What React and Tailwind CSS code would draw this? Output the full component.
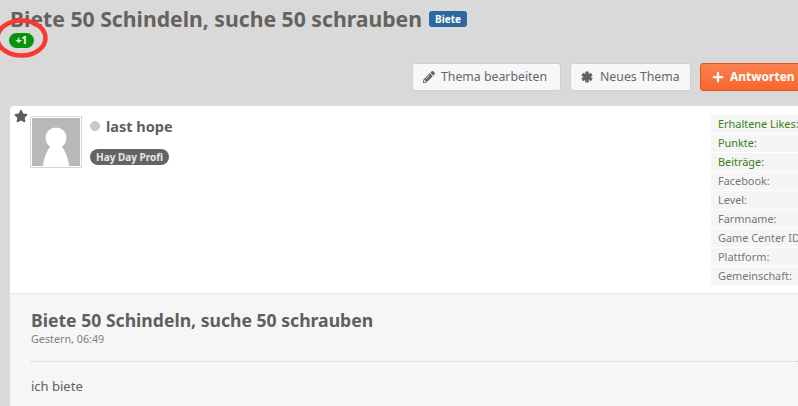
import { FaPencilAlt, FaPlus, FaStar } from "react-icons/fa";

const FONT = "font-['Noto_Sans','Open_Sans',sans-serif]";

const STATS = [
  { label: "Erhaltene Likes:", green: true },
  { label: "Punkte:", green: true },
  { label: "Beiträge:", green: true },
  { label: "Facebook:" },
  { label: "Level:" },
  { label: "Farmname:" },
  { label: "Game Center ID:" },
  { label: "Plattform:" },
  { label: "Gemeinschaft:" },
];

function ToolButton({ icon, label, className }) {
  return (
    <button className={`flex h-[28px] shrink-0 items-center rounded-[3px] border border-[#cfcfcf] bg-[#f7f7f7] text-[12.3px] text-[#66666a] ${className}`}>
      {icon}
      {label}
    </button>
  );
}

function AsteriskIcon() {
  return (
    <svg viewBox="0 0 12 12" className="h-[12px] w-[12px] text-[#66625f]" stroke="currentColor" strokeWidth="3.4">
      <path d="M6 .5V11.5M1.2 3.2 10.8 8.8M10.8 3.2 1.2 8.8" />
    </svg>
  );
}

function Avatar() {
  return (
    <div className="h-[52px] w-[52px] shrink-0 border border-[#d6d6d6] bg-white p-[1px]">
      <svg viewBox="0 0 48 48" className="h-full w-full">
        <rect width="48" height="48" fill="#b8b8b8" />
        <circle cx="24" cy="20" r="10.5" fill="#fff" />
        <path d="M11 48 C12 38 16 30 20 27 L28 27 C32 30 36 38 37 48 Z" fill="#fff" />
      </svg>
    </div>
  );
}

export default function App() {
  return (
    <div className={`relative h-[406px] w-[798px] overflow-hidden bg-[#d9d9d9] ${FONT}`}>
      <div className="pl-[10px] pt-[6px]">
        <div className="flex h-[25px] items-center gap-[7px]">
          <h1 className="whitespace-nowrap text-[21.2px] font-bold text-[#66625f]">Biete 50 Schindeln, suche 50 schrauben</h1>
          <span className="rounded-[3px] bg-[#2b689f] px-[6px] text-[10px] font-bold leading-[16px] text-white">Biete</span>
        </div>
        <span className="-ml-px mt-[2px] flex h-[15px] w-[25px] items-center justify-center rounded-full bg-[#089408] text-[10px] font-bold text-white">+1</span>
      </div>

      {/* red marker around the +1 badge */}
      <svg className="absolute left-0 top-[17px]" width="50" height="42" viewBox="0 0 50 42">
        <ellipse cx="21.5" cy="21" ry="17.5" rx="24" fill="none" stroke="#f8392f" strokeWidth="4.5" />
      </svg>

      <div className="mt-[15px] flex gap-[9px] pl-[412px]">
        <ToolButton className="w-[149px] gap-[6px] pl-[10px]" label="Thema bearbeiten" icon={<FaPencilAlt className="h-[12px] w-[12px] text-[#66625f]" />} />
        <ToolButton className="w-[121px] gap-[7px] pl-[10px]" label="Neues Thema" icon={<AsteriskIcon />} />
        <button className="flex h-[28px] w-[110px] shrink-0 items-center gap-[6px] rounded-[3px] border border-[#d85a22] bg-gradient-to-b from-[#fb8250] to-[#f9652a] pl-[11px] text-[12px] font-bold text-white">
          <FaPlus className="h-[12px] w-[12px]" />
          Antworten
        </button>
      </div>

      <div className="ml-[10px] mt-[15px] w-[800px] rounded-tl-[4px] bg-white">
        <div className="relative flex h-[188px] justify-between border-b border-[#e8e8e8] pl-[20px] pt-[10px]">
          <FaStar className="absolute left-[4px] top-[3px] h-[14px] w-[14px] text-[#5d5d5d]" />
          <div className="flex gap-[8px]">
            <Avatar />
            <div>
              <div className="flex items-center gap-[6px]">
                <span className="h-[10px] w-[10px] rounded-full border border-[#c4c4c4] bg-[#c9c9c9]" />
                <span className="text-[14.5px] font-bold leading-[20px] text-[#5f5f63]">last hope</span>
              </div>
              <span className="mt-[13px] block w-fit rounded-full bg-[#666462] px-[6px] text-[10px] font-bold leading-[16px] text-[#e8e8e8]">Hay Day Profi</span>
            </div>
          </div>
          <ul className="-mt-px flex w-[99px] flex-col gap-[1px] overflow-hidden">
            {STATS.map((s) => (
              <li
                key={s.label}
                className={`h-[18px] whitespace-nowrap rounded-l-[3px] bg-[#f5f5f5] pl-[7px] text-[10.9px] leading-[18px] ${s.green ? "text-[#3a7d1c]" : "text-[#777777]"}`}
              >
                {s.label}
              </li>
            ))}
          </ul>
        </div>
        <div className="h-[113px] bg-[#f6f6f6] pl-[21px] pr-[10px] pt-[14px]">
          <h2 className="whitespace-nowrap text-[17.6px] font-bold leading-[24px] text-[#5f5f5f]">Biete 50 Schindeln, suche 50 schrauben</h2>
          <p className="text-[10.75px] leading-[14px] text-[#808080]">Gestern, 06:49</p>
          <div className="mt-[15px] border-t border-dotted border-[#cccccc] pt-[15px] text-[13px] leading-[18px] text-[#606060]">ich biete</div>
        </div>
      </div>
    </div>
  );
}
